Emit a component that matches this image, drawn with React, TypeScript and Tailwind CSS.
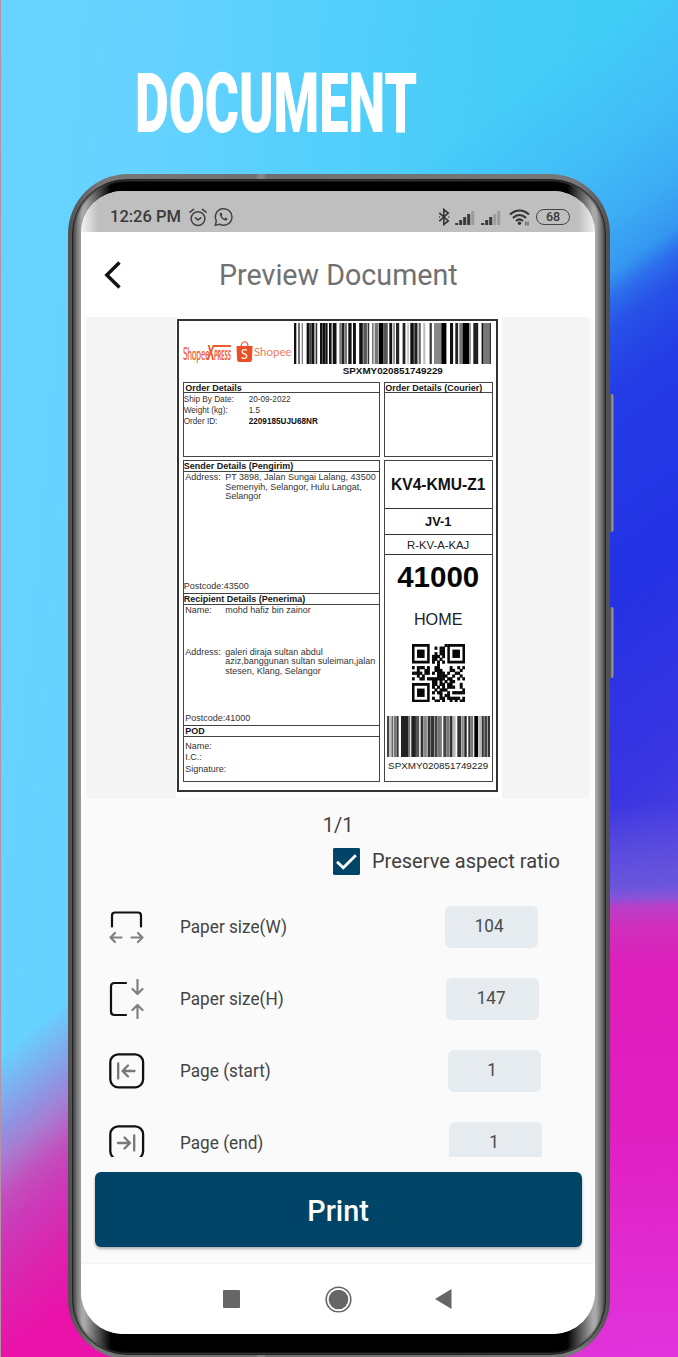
import React from "react";

type Bar = [number, number, string];

const D = "#111";
const G = "#777";
const L = "#bbb";

const TOP_BARS: Bar[] = [
  [0, 2.3, D], [4.3, 1.4, "#333"], [7.7, 1.2, G], [12.6, 3, D], [15.6, 2, "#444"], [17.6, 2.8, D], [21.6, 1.6, "#333"],
  [26, 7.6, D], [28, 0.7, G], [31.2, 0.6, G], [35, 2.6, D], [38.7, 3.8, D],
  [45.3, 2.6, G], [48, 2.4, "#222"], [50.6, 2.4, G], [54.3, 3.3, D], [59, 2.9, D],
  [65.2, 3.6, D], [69.3, 3.6, "#555"], [73.6, 1.6, "#333"],
  [78, 1.6, G], [80.6, 4, G], [85, 4.6, "#000"], [90, 3.8, "#555"], [95.3, 2.9, D], [99.3, 1.5, G], [102, 3.2, "#222"],
  [108.6, 2.8, "#222"], [113.3, 1.5, L], [116.3, 3.5, D], [120.3, 3.2, "#222"], [124.6, 2.2, "#666"], [129.3, 2, L],
  [135.6, 2.2, "#333"], [140, 7.3, "#888"], [147.3, 5.1, "#000"],
  [156, 3.1, D], [161.3, 2.8, "#222"], [165.3, 3.3, G], [168.6, 6.8, "#000"], [175.4, 1.6, "#999"], [179.3, 4.9, "#222"],
  [187.6, 2, D], [190, 5.4, G], [195.4, 1.6, "#333"],
];

const SIDE_BARS: Bar[] = [
  [0, 2.2, "#444"], [2.3, 2, L], [4.6, 1.2, "#444"], [6.6, 2.9, G], [9.6, 2, "#333"],
  [14, 7.6, "#222"], [21.6, 1.6, G], [24.3, 4.6, "#222"], [29, 3.2, "#555"],
  [33.6, 2.6, "#333"], [36.3, 3.6, "#888"], [40.6, 3, "#333"], [44, 3.2, "#333"], [47.6, 3, "#444"], [51, 3.8, G],
  [56.3, 3.3, "#444"], [60, 2.2, G], [62.6, 3, "#333"], [65.6, 3, L], [70.3, 3.9, "#333"], [74.6, 2.2, "#888"], [77.3, 2.4, "#222"],
  [81.3, 2.2, "#333"], [83.6, 2.6, G], [87.3, 3.9, "#000"], [92, 2, L], [94.6, 2.2, "#333"], [97.3, 2.8, "#444"], [100.6, 2.4, "#333"],
];

const QR = [
  ".............#.......",
  ".........#.##........",
  "...........##........",
  ".........#.##........",
  "........###.#........",
  "........##.#.........",
  "........#.#.#........",
  "..........#..........",
  "#.###.#..##....#..#.#",
  "..#..##..###...##..#.",
  "####.##.#.###.#..##..",
  "..#.#.....####..#..#.",
  "#..##.#######.##..#.#",
  "........##.#.#.##....",
  "........##.##.##...#.",
  "........#.#.#.###..#.",
  ".........#.###......#",
  "........#.##..#.#####",
  "...........#.##......",
  "........#..##.#####.#",
  ".........##.#..#.#.##",
];

function Barcode({ bars, width, className }: { bars: Bar[]; width: number; className: string }) {
  return (
    <svg className={className} viewBox={`0 0 ${width} 40`} preserveAspectRatio="none">
      {bars.map(([x, w, c], i) => (
        <rect key={i} x={x} y={0} width={w} height={40} fill={c} />
      ))}
    </svg>
  );
}

function Finder({ x, y }: { x: number; y: number }) {
  return (
    <g>
      <rect x={x + 0.5} y={y + 0.5} width="6" height="6" fill="none" stroke="#080808" strokeWidth="1" />
      <rect x={x + 2} y={y + 2} width="3" height="3" fill="#080808" />
    </g>
  );
}

function QrCode() {
  return (
    <svg className="h-[58.5px] w-[53px] shrink-0" viewBox="0 0 21 21" preserveAspectRatio="none">
      <Finder x={0} y={0} />
      <Finder x={14} y={0} />
      <Finder x={0} y={14} />
      {QR.map((row, y) =>
        row.split("").map((c, x) => (c === "#" ? <rect key={`${x}-${y}`} x={x - 0.08} y={y - 0.08} width={1.16} height={1.16} fill="#080808" /> : null)),
      )}
    </svg>
  );
}

function Signal({ fade }: { fade: number }) {
  return (
    <svg className="h-[15px] w-[20px]" viewBox="0 0 20 15">
      {[0, 1, 2, 3, 4].map((i) => (
        <rect key={i} x={i * 4 + 0.2} y={13 - i * 3} width={3} height={2 + i * 3} fill={i >= fade ? "#9c9c9c" : "#3a3a3a"} />
      ))}
    </svg>
  );
}

function StatusBar() {
  return (
    <div className="flex h-[41px] items-center bg-[linear-gradient(90deg,#f4f4f4_0,#bfbfbf_17px,#bfbfbf_497px,#f0f0f0_514px)] pt-[11px] pl-[29px] text-[#3a3a3a]">
      <span className="w-[79px] shrink-0 text-[16.5px] leading-5 font-medium whitespace-nowrap">12:26 PM</span>
      <svg className="h-[19px] w-[18px] shrink-0" viewBox="0 0 18 19" fill="none" stroke="#444" strokeWidth="1.6" strokeLinecap="round">
        <circle cx="9" cy="10.6" r="6.9" />
        <path d="M1 4.2 4.6 1.3M17 4.2 13.4 1.3M6.5 9.8 9 12 11.8 9.8" />
      </svg>
      <svg className="ml-[7px] h-[20px] w-[19px] shrink-0" viewBox="0 0 19 20" fill="none" stroke="#444" strokeWidth="1.5" strokeLinejoin="round">
        <path d="M1.2 18.4 2.4 14A8.3 8.3 0 1 1 5.6 17.2Z" />
        <path d="M6.4 5.6C5 6.7 5.4 8.4 7.2 10.7c2 2.4 4.3 3.5 5.9 2.2l.4-1.3-2-1-1 1C9.2 11 8.3 10 7.7 8.9l.8-1-.8-2Z" fill="#444" stroke="none" />
      </svg>
      <svg className="ml-[204.5px] h-[18px] w-[12px] shrink-0" viewBox="0 0 12 18" fill="none" stroke="#333" strokeWidth="1.6">
        <path d="M1.3 4.8 10.3 13 5.8 16.5V1.5L10.3 5 1.3 13.2" />
        <circle cx="1.5" cy="9" r=".7" fill="#333" stroke="none" />
        <circle cx="10.8" cy="9" r=".7" fill="#333" stroke="none" />
      </svg>
      <div className="ml-[5px] flex shrink-0 gap-[6px]">
        <Signal fade={4} />
        <Signal fade={3} />
      </div>
      <svg className="ml-[8px] h-[17px] w-[21px] shrink-0" viewBox="0 0 21 17" fill="none" stroke="#333" strokeWidth="2.1">
        <path d="M1 5.6C6.5.1 14.5.1 20 5.6M3.9 9C8 5 13 5 17.1 9M7 12c2.3-2.1 4.7-2.1 7 0" />
        <circle cx="10.5" cy="14.2" r="1.7" fill="#333" stroke="none" />
        <path d="M16.8 16.5v-4M19 12.5v4" strokeWidth=".9" />
      </svg>
      <div className="ml-[6.5px] flex h-[16px] w-[34px] shrink-0 items-center justify-center rounded-full border-[1.5px] border-[#444]">
        <span className="text-[12.5px] leading-none font-medium">68</span>
      </div>
    </div>
  );
}

function Header() {
  return (
    <div className="flex h-[85px] items-center bg-white pl-[22.5px]">
      <svg className="h-[30px] w-[18px]" viewBox="0 0 18 30" fill="none" stroke="#111" strokeWidth="3.4">
        <path d="M15.5 2.5 2.8 15l12.7 12.5" />
      </svg>
      <h1 className="ml-[97.5px] origin-left scale-x-[0.955] text-[30px] leading-none font-normal whitespace-nowrap text-[#717171]">Preview Document</h1>
    </div>
  );
}

function Logos() {
  return (
    <div className="flex h-[28px] w-[111px] items-center text-[#ee5a30]">
      <div className="flex w-[53px] shrink-0 items-baseline whitespace-nowrap">
        <span className="w-[24px] origin-left scale-x-[0.47] font-['Lato',sans-serif] text-[18px] leading-none font-medium tracking-[-0.5px]">Shopee</span>
        <span className="w-[7px] origin-left scale-x-[0.58] font-['Lato',sans-serif] text-[20px] leading-none font-black italic">X</span>
        <span className="w-[17px] origin-left scale-x-[0.47] font-['Lato',sans-serif] text-[13px] leading-none font-black italic overline decoration-2">PRESS</span>
      </div>
      <svg className="h-[23px] w-[17px] shrink-0" viewBox="0 0 17 23">
        <path d="M5 7C5 0 12 0 12 7" fill="none" stroke="#ee5a30" strokeWidth="1.2" />
        <path d="M.5 6h16l-.6 14q-.1 2-2 2H3.1q-1.9 0-2-2Z" fill="#ed4d25" />
        <text x="8.5" y="18.5" textAnchor="middle" fontFamily="Lato, sans-serif" fontSize="12.5" fill="#fff">S</text>
      </svg>
      <span className="ml-px origin-left scale-x-[0.97] font-['Lato',sans-serif] text-[11.8px] leading-none text-[#f07a5c]">Shopee</span>
    </div>
  );
}

function SectionTitle({ children, className = "" }: { children: React.ReactNode; className?: string }) {
  return <div className={`text-[9px] font-bold whitespace-nowrap text-[#151515] ${className}`}>{children}</div>;
}

function ShippingLabel() {
  return (
    <div className="h-[481px] w-[326px] bg-white pt-[1.5px] pl-[1.5px] font-['Liberation_Sans',sans-serif] text-[#333]">
      <div className="h-[473.5px] w-[321px] border-2 border-[#333] px-[3.5px]">
        <div className="flex h-[61.5px]">
          <div className="pt-[17px]"><Logos /></div>
          <div className="w-[197px] pt-[2.5px]">
            <Barcode bars={TOP_BARS} width={197} className="h-[41px] w-[197px]" />
            <div className="ml-[49px] pt-[2px] text-[9.85px] leading-[10px] font-bold text-[#111]">SPXMY020851749229</div>
          </div>
        </div>

        <div className="flex gap-[4px]">
          <div className="h-[75px] w-[197px] border border-[#444]">
            <SectionTitle className="h-[10px] border-b border-[#444] pl-[1.5px] leading-[10px]">Order Details</SectionTitle>
            <div className="grid grid-cols-[65px_1fr] pt-[0.5px] text-[8.2px] leading-[11.2px]">
              <span>Ship By Date:</span><span>20-09-2022</span>
              <span>Weight (kg):</span><span>1.5</span>
              <span>Order ID:</span><b className="text-[#111]">2209185UJU68NR</b>
            </div>
          </div>
          <div className="h-[75px] w-[109px] border border-[#444]">
            <SectionTitle className="h-[10px] border-b border-[#444] pl-[0.5px] leading-[10px]">Order Details (Courier)</SectionTitle>
          </div>
        </div>

        <div className="mt-[2.5px] flex gap-[4px]">
          <div className="h-[322px] w-[197px] border border-[#444] text-[9px] leading-[9.6px]">
            <SectionTitle className="h-[11px] border-b border-[#444] leading-[11px]">Sender Details (Pengirim)</SectionTitle>
            <div className="flex h-[122.5px] flex-col justify-between border-b border-[#444]">
              <div className="grid grid-cols-[40px_1fr] pt-[1.5px] pl-[1.5px] whitespace-nowrap">
                <span>Address:</span>
                <span>PT 3898, Jalan Sungai Lalang, 43500<br />Semenyih, Selangor, Hulu Langat,<br />Selangor</span>
              </div>
              <div className="pb-[1px]">Postcode:43500</div>
            </div>
            <SectionTitle className="h-[10.5px] border-b border-[#444] leading-[10.5px]">Recipient Details (Penerima)</SectionTitle>
            <div className="flex h-[121px] flex-col border-b border-[#444] pl-[1.5px]">
              <div className="grid grid-cols-[40px_1fr] pt-[1.5px]"><span>Name:</span><span>mohd hafiz bin zainor</span></div>
              <div className="grid grid-cols-[40px_1fr] pt-[32px] whitespace-nowrap">
                <span>Address:</span>
                <span>galeri diraja sultan abdul<br />aziz,banggunan sultan suleiman,jalan<br />stesen, Klang, Selangor</span>
              </div>
              <div className="mt-auto pb-[1px]">Postcode:41000</div>
            </div>
            <SectionTitle className="h-[11px] border-b border-[#444] pl-[1.5px] leading-[11px]">POD</SectionTitle>
            <div className="flex flex-col pt-[4px] pl-[1.5px] leading-[11.6px]">
              <span>Name:</span><span>I.C.:</span><span>Signature:</span>
            </div>
          </div>

          <div className="flex h-[322px] w-[109px] flex-col items-center border border-[#444] text-[#222]">
            <div className="flex h-[48px] w-full items-center justify-center border-b-[1.5px] border-[#333] pt-[2px] text-[15.6px] font-bold whitespace-nowrap text-[#111]">KV4-KMU-Z1</div>
            <div className="flex h-[26px] w-full items-center justify-center border-b-[1.5px] border-[#333] pt-[1px] text-[12.8px] font-bold text-[#111]">JV-1</div>
            <div className="flex h-[20px] w-full items-center justify-center border-b-[1.5px] border-[#333] pt-[3px] text-[11.3px]">R-KV-A-KAJ</div>
            <div className="mt-[6px] text-[29.5px] leading-[32px] font-bold text-[#060606]">41000</div>
            <div className="mt-[16px] h-[35px] text-[16.2px] leading-[20px]">HOME</div>
            <QrCode />
            <Barcode bars={SIDE_BARS} width={103} className="mt-[14px] h-[41px] w-[103px] shrink-0" />
            <div className="mt-[4px] text-[9.85px] leading-[10px]">SPXMY020851749229</div>
          </div>
        </div>
      </div>
    </div>
  );
}

function WidthIcon() {
  return (
    <svg className="h-[36px] w-[36px]" viewBox="0 0 36 36" fill="none" strokeWidth="2.2" strokeLinecap="round" strokeLinejoin="round">
      <path d="M3 17.5V6.5q0-3 3-3h23q3 0 3 3V17.5" stroke="#111" />
      <path d="M12.500 28.5H1.500M6 24 1.500 28.5 6 33M22.500 28.500h11M29 24l4.500 4.500-4.500 4.500" stroke="#808080" />
    </svg>
  );
}

function HeightIcon() {
  return (
    <svg className="h-[40px] w-[36px]" viewBox="0 0 36 40" fill="none" strokeWidth="2.2" strokeLinecap="round" strokeLinejoin="round">
      <path d="M17 4H5.500Q2 4 2 7.500v25Q2 36 5.500 36H17" stroke="#111" />
      <path d="M28.500 1v13.500M23.500 10l5 5 5-5M28.500 39V26M23.500 31l5-5 5 5" stroke="#808080" />
    </svg>
  );
}

function StartIcon() {
  return (
    <svg className="h-[36px] w-[36px]" viewBox="0 0 36 36" fill="none" strokeWidth="2.3" strokeLinecap="round" strokeLinejoin="round">
      <rect x="1.300" y="1.300" width="32.800" height="33" rx="8" stroke="#111" />
      <path d="M9.200 10.500v15M25.500 18H14.500M19 12.500 13.500 18l5.500 5.500" stroke="#777" />
    </svg>
  );
}

function EndIcon() {
  return (
    <svg className="h-[36px] w-[36px]" viewBox="0 0 36 36" fill="none" strokeWidth="2.3" strokeLinecap="round" strokeLinejoin="round">
      <rect x="1.300" y="1.300" width="32.800" height="33" rx="8" stroke="#111" />
      <path d="M25.200 10.500v15M9 18H20.500M15.500 12.500l5.500 5.500-5.500 5.500" stroke="#777" />
    </svg>
  );
}

const SETTINGS = [
  { label: "Paper size(W)", value: "104", icon: <WidthIcon />, gap: "ml-[265px]" },
  { label: "Paper size(H)", value: "147", icon: <HeightIcon />, gap: "ml-[266.300px]" },
  { label: "Page (start)", value: "1", icon: <StartIcon />, gap: "ml-[267.800px]" },
  { label: "Page (end)", value: "1", icon: <EndIcon />, gap: "ml-[269.200px]" },
];

function Settings() {
  return (
    <div className="h-[268px] shrink-0 overflow-hidden pt-[2.300px]">
      {SETTINGS.map((s) => (
        <div key={s.label} className="flex h-[72px] items-center pl-[28px]">
          <div className="flex w-[71px] shrink-0">{s.icon}</div>
          <div className="w-0 whitespace-nowrap">
            <span className="inline-block origin-left scale-x-[0.935] text-[18.4px] leading-6 text-[#444]">{s.label}</span>
          </div>
          <div className={`flex h-[42px] w-[93px] shrink-0 items-center justify-center rounded-[6px] bg-[#e5ebee] pr-[4px] pb-[3px] text-[18px] text-[#4a4a4a] ${s.gap}`}>
            <span className="scale-x-[0.95]">{s.value}</span>
          </div>
        </div>
      ))}
    </div>
  );
}

function Screen() {
  return (
    <div className="flex h-[1143px] w-[514px] flex-col overflow-hidden rounded-[42px] bg-[#fafafa] font-['Roboto',sans-serif]">
      <StatusBar />
      <Header />
      <div className="flex h-[481px] bg-[linear-gradient(90deg,#fff_3px,#f4f4f4_7px,#f4f4f4_506px,#fdfdfd_511px)] pl-[94.700px]">
        <ShippingLabel />
      </div>
      <div className="flex h-[50px] items-center justify-center pt-[5px] text-[21px] text-[#444]"><span className="scale-x-[0.95]">1/1</span></div>
      <div className="flex h-[41px] items-start pl-[252px]">
        <svg className="h-[27px] w-[27px]" viewBox="0 0 27 28" preserveAspectRatio="none">
          <rect width="27" height="28" rx="1.500" fill="#004467" />
          <path d="M4 14.300 10.300 20.500 22.800 7.500" fill="none" stroke="#fff" strokeWidth="2.800" />
        </svg>
        <span className="ml-[11.5px] origin-left scale-x-[0.952] text-[21px] leading-[27px] whitespace-nowrap text-[#404040]">Preserve aspect ratio</span>
      </div>
      <Settings />
      <div className="flex flex-1 flex-col">
        <button className="mt-[14.5px] ml-[14px] flex h-[75.5px] w-[487px] items-center justify-center rounded-[6px] bg-[#004467] pt-[2px] text-[30px] font-medium text-white shadow-[0_2px_3px_rgba(0,0,0,0.3)]">
          <span className="scale-x-[0.96]">Print</span>
        </button>
      </div>
      <div className="flex h-[71px] items-center border-t border-[#f4f4f4] bg-white pl-[142px]">
        <div className="h-[18px] w-[17px] rounded-[1px] bg-[#666]" />
        <svg className="ml-[85px] h-[27px] w-[27px]" viewBox="0 0 27 27">
          <circle cx="13.500" cy="13.500" r="12.300" fill="none" stroke="#666" strokeWidth="1.6" />
          <circle cx="13.500" cy="13.500" r="9.800" fill="#666" />
        </svg>
        <svg className="ml-[83px] h-[20px] w-[17px]" viewBox="0 0 17 20"><path d="M0 10 16.500 0v20Z" fill="#666" /></svg>
      </div>
    </div>
  );
}

export default function App() {
  return (
    <div className="relative h-[1357px] w-[678px] overflow-hidden border-l border-[#b493a8] [background:linear-gradient(140deg,rgba(104,205,255,0)_80px,#8f94e2_138px,#a97acf_162px,#c250bc_190px,#cb3bb9_215px,#dd22ae_268px,#ea12a8_315px,#e812b0)_0_950px/200px_407px_no-repeat,linear-gradient(178.500deg,rgba(90,72,222,0)_810px,#6a55dc_892px,#8a52d8_904px,#b83fc8_912px,#d02fbd_932px,#de1eba_975px,#e01fc0_1130px,#e033dc_1360px)_400px_0/278px_1357px_no-repeat,linear-gradient(144deg,rgba(63,190,247,0)_141px,#42bcf7_244px,#3cabf4_305px,#3596f1_345px,#2c6deb_365px,#2852e8_388px,#2545e6_420px,#243be6_447px,#2432e4_608px,#3a35e2_770px,#4c42e0_860px)_400px_0/278px_1357px_no-repeat,linear-gradient(95deg,#68d3ff_0,#66d2ff_150px,#55cffb_320px,#46cdf8_500px,#40cdf6_620px,#43c4f7_760px)]">
      <div className="flex h-[174px] pt-[53.5px] pl-[134px]">
        <h2 className="origin-left scale-x-[0.632] font-['Roboto',sans-serif] text-[82.500px] leading-[100px] font-black whitespace-nowrap text-white">DOCUMENT</h2>
      </div>
      <div className="flex items-start">
        <div className="ml-[66.500px] h-[1185px] w-[542px] rounded-[60px] bg-[linear-gradient(90deg,#505052_0,#77777a_30px,#707073_188px,#858588_190px,#858588_196px,#707073_198px,#77777a_510px,#505052)] p-[4px] pt-[5px]">
          <div className="h-full w-full rounded-[55px] border border-[#222] bg-[linear-gradient(90deg,transparent_12px,#000_38px,#000_494px,transparent_520px),linear-gradient(90deg,#444_0,#777_4px,#a9a9a9_9px,#a9a9a9_523px,#777_528px,#4a4a4a_532px)] pt-[11px] pl-[8.500px] shadow-[inset_0_0_2px_1px_#444]">
            <Screen />
          </div>
        </div>
        <div className="flex flex-col">
          <div className="mt-[220px] h-[138px] w-[4px] rounded-r-[3px] bg-[linear-gradient(90deg,#45454a,#9a9aa0_60%,#55555c)]" />
          <div className="mt-[75px] h-[71px] w-[4px] rounded-r-[3px] bg-[linear-gradient(90deg,#45454a,#9a9aa0_60%,#55555c)]" />
        </div>
      </div>
    </div>
  );
}
